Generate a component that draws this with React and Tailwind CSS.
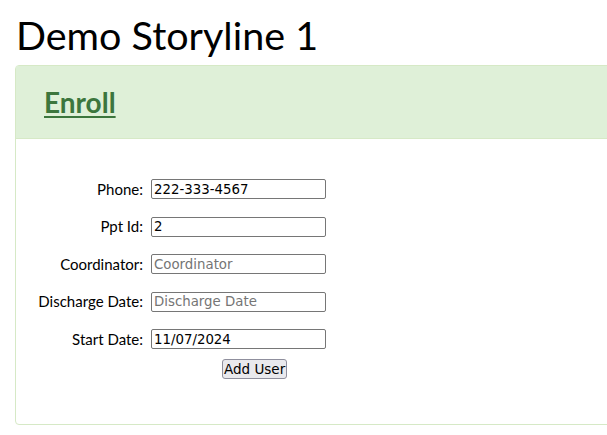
import React from 'react'

const FIELDS = [
  { label: 'Phone:', value: '222-333-4567' },
  { label: 'Ppt Id:', value: '2' },
  { label: 'Coordinator:', placeholder: 'Coordinator' },
  { label: 'Discharge Date:', placeholder: 'Discharge Date' },
  { label: 'Start Date:', value: '11/07/2024' },
]

export default function App() {
  return (
    <div className="min-h-screen overflow-hidden bg-white font-['Lato',sans-serif] text-black">
      <h1 className="ml-[16px] mt-[13px] mb-[9px] text-[39.5px] leading-[43px] font-normal">Demo Storyline 1</h1>

      <div className="ml-[15px] w-[650px] rounded-[4px] border border-[#d6e9c6] bg-white">
        {/* Heading */}
        <div className="flex h-[73px] items-center border-b border-[#d6e9c6] bg-[#dff0d8] pl-[28px]">
          <a href="#" className="text-[28px] leading-[31px] font-bold text-[#3c763d] underline underline-offset-[3px]">
            Enroll
          </a>
        </div>

        {/* Form */}
        <div className="pt-[40px] pb-[44px]">
          <div className="flex flex-col gap-[17.5px]">
            {FIELDS.map((f) => (
              <div key={f.label} className="flex h-5 items-center">
                <label className="w-[135px] pr-[8px] text-right text-[15px]">{f.label}</label>
                <input
                  type="text"
                  defaultValue={f.value}
                  placeholder={f.placeholder}
                  className="h-5 w-[175px] rounded-[2px] border border-[#767676] px-[2px] font-['DejaVu_Sans',sans-serif] text-[13.33px] text-black placeholder:text-[#757575] outline-none"
                />
              </div>
            ))}
          </div>
          <button className="ml-[206px] mt-[10px] h-[20px] rounded-[3px] border border-[#8f8f9d] bg-[#e9e9ed] px-[1px] font-['DejaVu_Sans',sans-serif] text-[13.5px] leading-[15px] text-black">
            Add User
          </button>
        </div>
      </div>
    </div>
  )
}
